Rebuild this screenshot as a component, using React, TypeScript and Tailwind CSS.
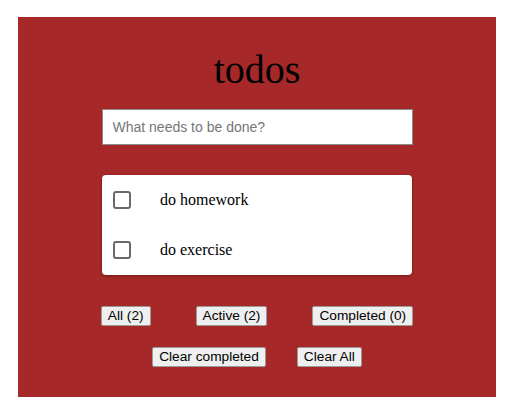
import React, { useState } from 'react';

type Todo = { id: number; text: string; done: boolean };

const App: React.FC = () => {
  const [todos, setTodos] = useState<Todo[]>([
    { id: 1, text: 'do homework', done: false },
    { id: 2, text: 'do exercise', done: false },
  ]);
  const [draft, setDraft] = useState('');

  const active = todos.filter(t => !t.done).length;
  const completed = todos.length - active;

  const toggle = (id: number) =>
    setTodos(todos.map(t => (t.id === id ? { ...t, done: !t.done } : t)));

  const btn =
    "px-[6px] h-[20px] text-[13.7px] leading-[16px] text-black bg-[#efefef] border border-[#9a9a9a] rounded-[2px] font-['Liberation_Sans',Arial,sans-serif]";

  return (
    <div className="min-h-screen bg-white pt-[17px] pl-[18px]">
      <div className="w-[478px] h-[380px] bg-[#a62828] flex flex-col items-center pt-[30px]">
        {/* Title */}
        <h1 className="text-[40px] leading-[46px] text-black font-['Liberation_Serif','Times_New_Roman',serif]">
          todos
        </h1>

        {/* New todo */}
        <input
          value={draft}
          onChange={e => setDraft(e.target.value)}
          placeholder="What needs to be done?"
          className="mt-[16px] w-[311px] h-[36px] bg-white border border-[#8a8a8a] pl-[10px] text-[14px] text-black placeholder:text-[#767676] outline-none font-['Liberation_Sans',Arial,sans-serif]"
        />

        {/* List */}
        <div className="mt-[30px] w-[310px] bg-white rounded-[4px] shadow-[0_1px_3px_rgba(0,0,0,0.35)] flex flex-col">
          {todos.map(t => (
            <div key={t.id} className="h-[50px] flex items-center pl-[11px]" onClick={() => toggle(t.id)}>
              <span
                className={`w-[18px] h-[18px] border-2 border-[#6a6a6a] rounded-[3px] ${
                  t.done ? 'bg-[#0075ff] border-[#0075ff]' : 'bg-white'
                }`}
              />
              <span className="ml-[29px] text-[16px] text-black font-['Liberation_Serif','Times_New_Roman',serif]">
                {t.text}
              </span>
            </div>
          ))}
        </div>

        {/* Filters */}
        <div className="mt-[31px] flex gap-[45px]">
          <button className={btn}>All ({todos.length})</button>
          <button className={btn}>Active ({active})</button>
          <button className={btn}>Completed ({completed})</button>
        </div>

        <div className="mt-[21px] flex gap-[31px]">
          <button className={btn} onClick={() => setTodos(todos.filter(t => !t.done))}>
            Clear completed
          </button>
          <button className={btn} onClick={() => setTodos([])}>
            Clear All
          </button>
        </div>
      </div>
    </div>
  );
};

export default App;
